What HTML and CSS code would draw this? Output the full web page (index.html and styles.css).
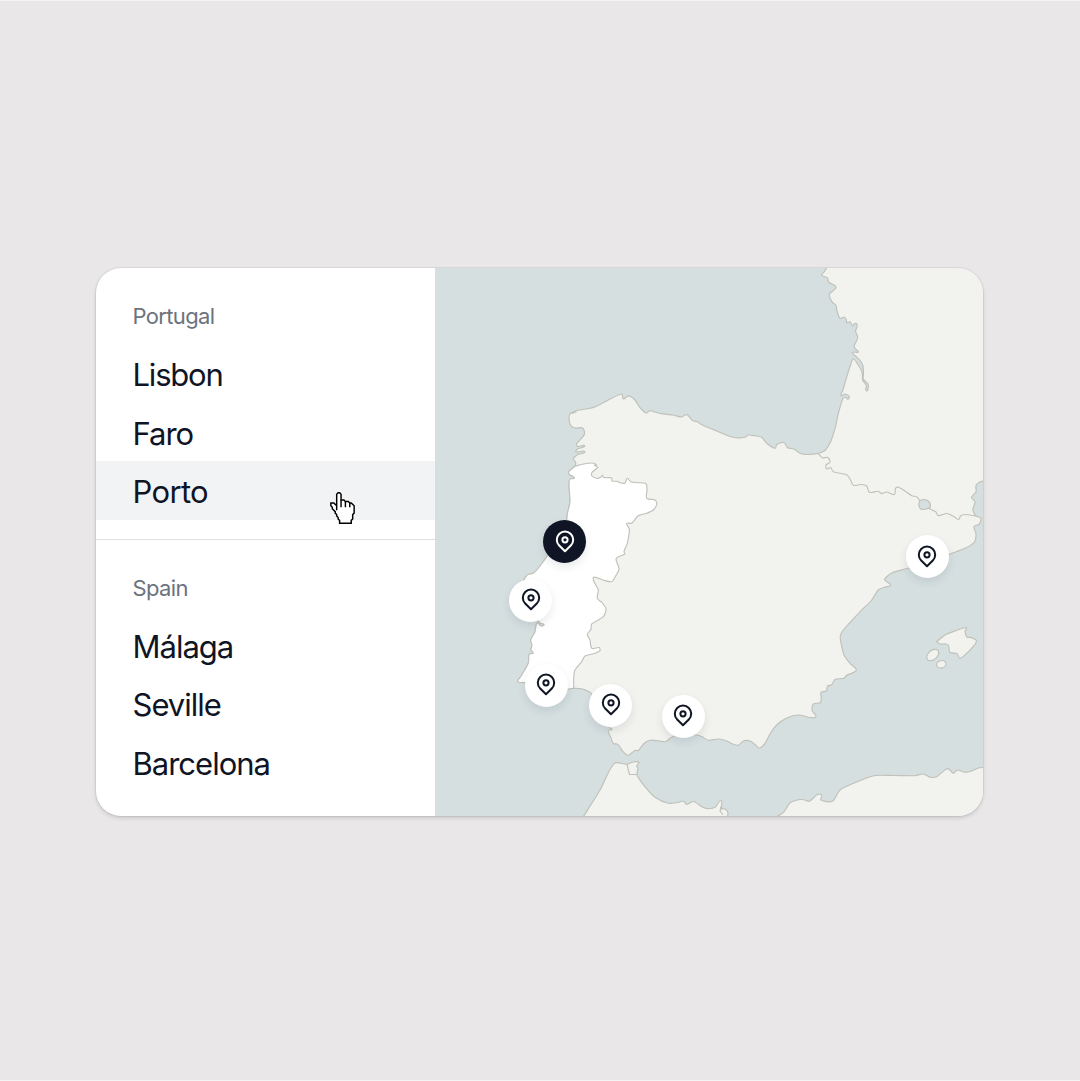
FILE: index.html
```html
<!DOCTYPE html>
<html lang="en">
<head>
<meta charset="utf-8">
<title>Destinations</title>
<link rel="stylesheet" href="styles.css">
</head>
<body>
<svg class="symbols" aria-hidden="true">
  <symbol id="pin" viewBox="-12 -12 24 24">
    <path d="M0 9.3-5.8 3.55a8.2 8.2 0 1 1 11.6 0Z"/>
    <circle cx="0" cy="-2.2" r="2.6"/>
  </symbol>
</svg>
<main class="card">
  <nav class="sidebar">
    <section class="group">
      <h2 class="country">Portugal</h2>
      <ul class="cities">
        <li class="city tight">Lisbon</li>
        <li class="city">Faro</li>
        <li class="city wide active">Porto
          <svg class="cursor" viewBox="0 0 17 22" aria-hidden="true">
            <path d="M4.500 12.500V1.500L5.500.500h1l1 1v4h2l1 1h2l1 1h1l2 2v5l-1 1v3l-1 1v2h-8v-2l-1-1v-1l-1-1v-1l-1-1v-1l-2-2v-1l-1-1v-2h2l2 2"/>
            <path d="M7.500 5.500v5M10.500 6.500v4M13.500 7.500v3"/>
          </svg>
        </li>
      </ul>
    </section>
    <section class="group">
      <h2 class="country">Spain</h2>
      <ul class="cities">
        <li class="city">Málaga</li>
        <li class="city">Seville</li>
        <li class="city">Barcelona</li>
      </ul>
    </section>
  </nav>
  <div class="map">
    <svg class="land" id="land" viewBox="435 268 548 548" aria-label="Map of the Iberian Peninsula"></svg>
    <span class="pin pin-porto selected"><svg><use href="#pin"/></svg></span>
    <span class="pin pin-lisbon"><svg><use href="#pin"/></svg></span>
    <span class="pin pin-faro"><svg><use href="#pin"/></svg></span>
    <span class="pin pin-seville"><svg><use href="#pin"/></svg></span>
    <span class="pin pin-malaga"><svg><use href="#pin"/></svg></span>
    <span class="pin pin-barcelona"><svg><use href="#pin"/></svg></span>
  </div>
</main>
<script src="map.js"></script>
</body>
</html>
```
FILE: styles.css
```css
* { box-sizing: border-box; }

body {
  margin: 0;
  min-height: 1081px;
  padding: 267px 97px 0 96px;
  border-top: 1px solid #f5f4f4;
  border-bottom: 1px solid #f5f4f4;
  background: #e9e7e8;
  font-family: Inter, "Liberation Sans", sans-serif;
  color: #0f1524;
}

.symbols { position: absolute; width: 0; height: 0; }

.card {
  display: flex;
  height: 548px;
  border-radius: 25px;
  overflow: hidden;
  background: #fff;
  box-shadow: 0 0 0 1px rgba(0, 0, 0, .05), 0 2px 4px rgba(0, 0, 0, .14);
}

.sidebar { flex: 0 0 339px; }

.group { padding: 33px 0 19px; }
.group + .group { border-top: 1.5px solid #dddfe1; }

.country {
  margin: 0;
  padding-left: 36.5px;
  height: 43px;
  line-height: 30px;
  font-size: 22px;
  font-weight: 400;
  letter-spacing: -.65px;
  color: #6c727e;
}

.cities { margin: 0; padding: 0; list-style: none; }

.city {
  display: flex;
  justify-content: space-between;
  height: 58.5px;
  padding: 1px 80px 0 36.5px;
  line-height: 60px;
  font-size: 31px;
  letter-spacing: -1px;
}

.tight { letter-spacing: -1.2px; }
.wide { letter-spacing: -.65px; }

.active { background: #f1f3f5; }

.cursor {
  width: 25px;
  height: 32px;
  margin-top: 29.5px;
  fill: #fff;
  stroke: #000;
  stroke-width: 1;
}

.map {
  position: relative;
  flex: 1;
  background: #d5dfe0;
}

.land {
  display: block;
  width: 548px;
  height: 548px;
  stroke: #bfc1ba;
  stroke-width: 1.15;
  stroke-linejoin: round;
}

.country-land { fill: #f2f3ee; }
.country-highlight { fill: #fff; }
.border { fill: none; }
.lake { fill: #d5dfe0; }

.pin {
  position: absolute;
  width: 43px;
  height: 43px;
  margin: -21.5px 0 0 -21.5px;
  display: grid;
  place-items: center;
  border-radius: 50%;
  background: #fff;
  color: #0f1524;
  box-shadow: 0 4px 9px rgba(30, 40, 60, .1);
}

.pin svg {
  width: 24px;
  height: 24px;
  fill: none;
  stroke: currentColor;
  stroke-width: 2;
  stroke-linejoin: round;
}

.selected { background: #0f1524; color: #fff; }

.pin-porto { left: 129.5px; top: 273.5px; }
.pin-lisbon { left: 95.5px; top: 332px; }
.pin-faro { left: 111px; top: 417px; }
.pin-seville { left: 175.7px; top: 437px; }
.pin-malaga { left: 248.4px; top: 448px; }
.pin-barcelona { left: 492px; top: 288.5px; }
```
FILE: map.js
```js
// Coastlines and borders as point lists; each one is drawn as a smooth curve.
const coastPortugal = [
  [575.3,466],[571,469.5],[568.5,472.5],[569.5,474.5],[574.5,478],[570,479],[569,485],[570,501.7],[567.3,514],[566.7,520],[562,532],
  [550,551.7],[540,566],[533.3,573.3],[528,574.5],[526,576.5],[524,580],[514,599],[520,612],[532,619],[538.3,620.7],[540,623],[544,624.5],
  [541,626],[537,623],[535,631.7],[530.7,640],[532,645],[531,650],[533.3,653.3],[529.3,654],[528.3,663.3],[520.7,676.7],[517.7,681.7],
  [525,682.7],[540,692],[555,694],[566.7,689.3],[573.7,688.3]];
const borderPortugal = [
  [575.3,466],[585,463.7],[592,463],[595,463.7],[596.5,464.8],[594.5,465.3],[598,467.2],[596,469],[592,472.5],[592,476],[596.7,478.3],[600.5,477.5],
  [602.5,475.3],[603.3,477.3],[607,477.7],[611.7,478],[612,481],[617,481.3],[621,483],[625,483],[627.3,478.3],[630.7,481.7],[638,482.7],
  [646,483.7],[647,490],[646.8,498.3],[655,500],[656.8,504],[653.3,510],[646,513.5],[638.3,515.7],[631.7,523.3],[626.7,523.3],[629.3,529],
  [628.7,536],[627.3,543.3],[624,551.7],[624.8,554],[618,557],[616,559.5],[619,569],[615,577],[611.7,581.7],[603,580],[593.3,577.7],
  [598.3,590],[597.3,598.3],[602,602.5],[606,609],[603.3,616.7],[591.7,624],[591,629.3],[587.3,634.3],[590,640],[591.7,648.3],[599,647.5],
  [600,650.7],[595,653.3],[585,656],[581.7,661.7],[575,670],[573.7,678],[573.7,688.3]];
const coastNorth = [
  [826.7,268],[824,272],[821.7,275],[824,276.5],[827.5,278],[828.5,282],[834.3,285.3],[836,287.5],[832.7,291],[829.3,294.3],[830.5,299],
  [833,303],[835.7,304.7],[837,311],[839.3,317.5],[841,318.5],[844,317],[846.5,320],[846.7,322.7],[850,321.8],[852.5,326],[854,324],
  [856.7,323.7],[857,327],[855.5,331],[857.7,337],[856,342],[854,346],[855.5,349],[858.3,352],[854,352],[852.5,353],[856,356.5],[860,360.3],
  [863,366],[863.5,374],[863.3,379],[868,384],[868.3,387.5],[867.3,390.8],[865.7,389.5],[866.5,386],[862.7,380],[862,372],[857.3,363.5],
  [853.3,359],[850.5,365.3],[846.7,377],[843,390],[841,395.5],[845,394],[849.3,396.5],[848,399.3],[845.5,397],[842.7,399],[838.3,413.7],
  [835,428.7],[830.5,442],[825,450.5],[818.3,453.5]];
const coastSpainNorth = [
  [818.3,453.5],[807,454.5],[800,453.3],[794,449],[787.5,447.7],[784.3,442.8],[777,444.3],[775,448.3],[766.7,443.3],[761.7,437.3],
  [755,435.8],[748,435],[745,437.3],[733.3,437.3],[716.7,431],[700,423.7],[698,422],[692.5,420.5],[687.7,415],[685,415],[681.7,417],
  [673,415],[660,413.5],[650,410.7],[646,413],[640,407.7],[635,400],[628.3,395.9],[623.3,399],[621.7,394],[606.7,401],[593.3,407.5],
  [577,410.5],[572,413],[576,411.8],[571,413],[569,417],[570.7,425.5],[575,428],[582.7,428],[584.5,434],[580,440],[576.5,444],
  [577.3,446.5],[584.7,446],[577.3,449],[576,452],[584.7,451.5],[577.3,454.8],[573.3,459],[575.7,462.3],[575.3,466]];
const coastSpainSouth = [
  [573.7,688.3],[581.7,688.7],[588.3,691.3],[591.7,694],[600,710],[610,728],[612,729.5],[608.3,730.7],[611,738],[613.3,743.5],[617,744],
  [620,747],[622.7,751.3],[628.3,755.5],[631,753.5],[635,750.5],[638.3,750.5],[644.3,743.3],[650,740.3],[658,740.7],[665,741.7],
  [671.7,737.3],[683,733],[695,734.7],[701.7,736.5],[708.3,740.3],[718.3,739],[726.7,741],[733.3,744.3],[738.3,745.3],[743.3,741],
  [750,741],[755,744.5],[759.3,748],[765,743.3],[770,734],[776.7,725],[786.7,718],[798.3,715],[810,717.5],[815.5,717.5],[815.3,714.5],
  [812.3,711],[813.3,704],[820.3,702.7],[821.3,698],[821,692.3],[826.3,691],[827.7,686],[831.7,684.8],[835,679.5],[844,678.3],
  [846.7,675.3],[854,672.3],[856.3,669.3],[850,663.3],[844,655],[841,643],[840.3,636],[843.3,630],[860,611.7],[871.7,600],[878.3,590],
  [885,587],[890.7,585.3],[885,580.5],[885.5,578],[891.7,573],[905,569],[930,562],[950,554],[965,548.3],[974.5,542],[976,534],
  [974,526.5],[979,524.5],[981,520],[980.7,518],[975.7,516]];
const coastFrance = [[975.7,516],[972.8,510],[975,501.7],[971.5,497.3],[976,492],[976,485.5],[979,482.5],[984,480.7]];
const borderPyrenees = [
  [818.3,453.5],[822.7,458],[827.5,457.3],[830,462],[826,465],[826.7,469],[830.5,467.5],[833.3,471.7],[846.7,474.7],[850,479],[853.5,485.3],
  [861,484.5],[866.7,486],[869.3,492.3],[878.3,491.3],[881.7,493.7],[886.7,492],[894.3,494.5],[895.7,488],[899,487.5],[905,491],
  [911.7,495.7],[917,497],[920,501],[924.3,504.7],[930,509],[936,512],[938.3,515.7],[946.7,513.5],[953,516],[958.7,519.5],[960.5,516],
  [965,514.5],[975.7,516]];
const africaWest = [
  [582.5,818],[600,790],[614.3,763.3],[626.7,764.3],[633.3,762],[639,762.3],[636.5,766],[638,768],[637,775],[645,786.7],[655,797.3],[668.3,803.3],
  [678,802.5],[683.3,801],[686.7,804.3],[693.3,801.5],[703.3,807.5],[709,808.7],[715,807.3],[721,800.3],[721.5,806],[720.5,808.5],
  [725,809],[728,813],[727,818]];
const africaEast = [
  [774,818],[783.3,812.7],[790,802.8],[798.3,799.7],[804,799.8],[809.3,801.3],[817.3,794.5],[821.7,795],[821,800],[832.3,801.3],[840,790],
  [863.3,779.3],[875,775.5],[895,775.5],[915,775.7],[923.3,774],[930.7,777.3],[937,776.5],[946.7,768.7],[950,770],[953.3,773.3],
  [957.3,770],[965,772.3],[971.7,771],[978.3,768],[984,767.3]];
const mallorca = [
  [936.7,641.7],[945,635],[955,631],[966.5,627.5],[965,631.5],[967,637],[971,637.5],[976.5,641],[970,650],[960,658.3],[957,653.5],
  [950,652.5],[948.5,645.5],[946,644],[940,644],[936.7,641.7]];

function curve(points, move = true) {
  let d = move ? `M${points[0]}` : "";
  for (let i = 0; i < points.length - 1; i++) {
    const a = points[Math.max(i - 1, 0)], b = points[i], c = points[i + 1];
    const e = points[Math.min(i + 2, points.length - 1)];
    const len = Math.hypot(c[0] - b[0], c[1] - b[1]);
    const tangent = (p, q) => {
      const n = Math.hypot(q[0] - p[0], q[1] - p[1]) || 1;
      return [(q[0] - p[0]) / n * len * 0.25, (q[1] - p[1]) / n * len * 0.25];
    };
    const t1 = tangent(a, c), t2 = tangent(b, e);
    d += `C${b[0] + t1[0]},${b[1] + t1[1]} ${c[0] - t2[0]},${c[1] - t2[1]} ${c}`;
  }
  return d;
}

const mainland = curve(coastNorth) + curve(coastSpainNorth, false) + curve(coastPortugal, false)
  + curve(coastSpainSouth, false) + curve(coastFrance, false) + "L990,480V262H827Z";
const portugal = curve(coastPortugal) + curve([...borderPortugal].reverse(), false) + "Z";

document.getElementById("land").innerHTML = `
  <path class="country-land" d="${mainland}"/>
  <path class="country-highlight" d="${portugal}"/>
  <path class="border" d="${curve(borderPyrenees)}"/>
  <path class="lake" d="M920 500.5q4-2 7.500 0 4 2.500 2.500 7-5 3-9.500 1.500-3-4-.500-8.500Z"/>
  <path class="country-land" d="${curve(africaWest)}Z"/>
  <path class="border" d="M627 764.500 629.500 774.500H637M722 807l-2 4 3 4"/>
  <path class="country-land" d="${curve(africaEast)}V820H774Z"/>
  <path class="country-land" d="${curve(mallorca)}Z"/>
  <ellipse class="country-land" cx="932.700" cy="655" rx="7" ry="4.500" transform="rotate(-42 932.700 655)"/>
  <ellipse class="country-land" cx="941.300" cy="664.300" rx="4.800" ry="3.700" transform="rotate(-15 941.300 664.300)"/>`;
```
